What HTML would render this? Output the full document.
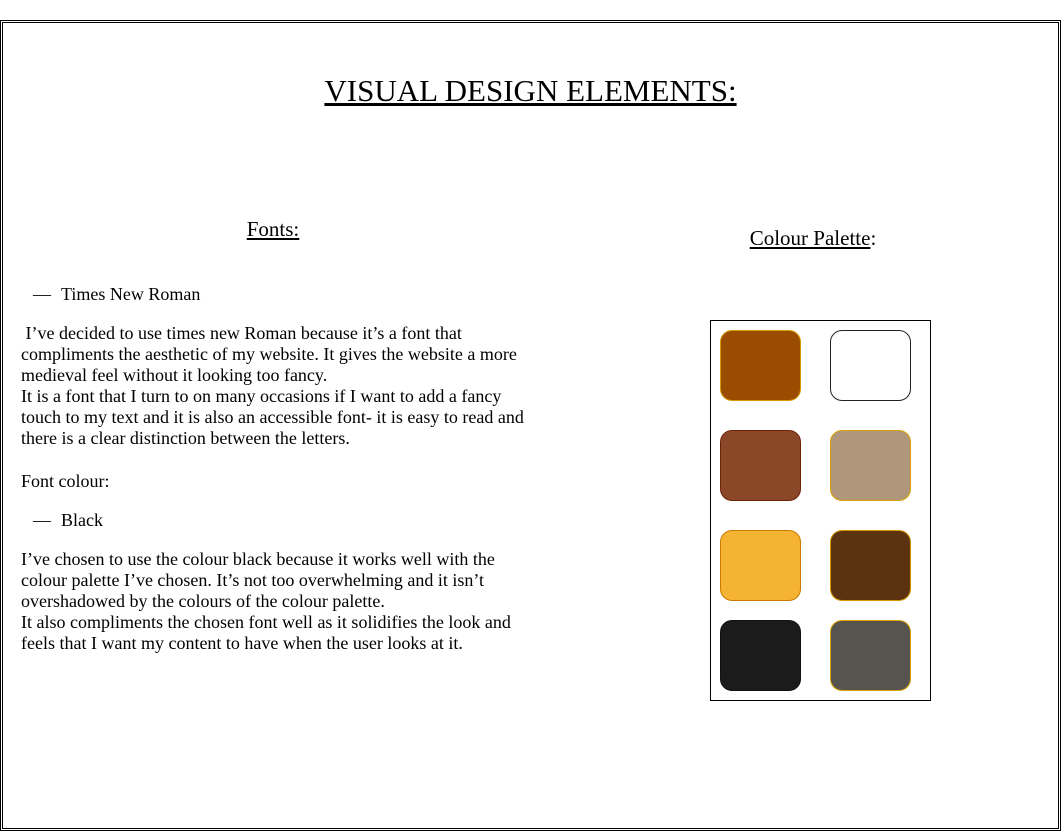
<!DOCTYPE html>
<html><head><style>
body{margin:0;width:1061px;height:831px;background:#fff;font-family:"Liberation Serif",serif;color:#000;position:relative;overflow:hidden}
.b1{position:absolute;left:0;top:20px;width:1059px;height:809px;border:1px solid #000}
.b2{position:absolute;left:2px;top:22px;width:1055px;height:805px;border:1px solid #000}
.t{position:absolute;white-space:nowrap;font-size:18px}
p{position:absolute;margin:0;font-size:18px;line-height:21px;white-space:nowrap}
.pal{position:absolute;left:710px;top:320px;width:219px;height:379px;border:1px solid #000}
.s{position:absolute;width:79px;height:69px;border-radius:12px;border:1px solid}
</style></head><body>
<div class="b1"></div><div class="b2"></div>
<div class="t" style="left:0;width:1061px;text-align:center;top:73px;font-size:31px;text-decoration:underline;">VISUAL DESIGN ELEMENTS:</div>
<div class="t" style="left:173px;width:200px;text-align:center;top:217px;font-size:21px;text-decoration:underline">Fonts:</div>
<div class="t" style="left:713px;width:200px;text-align:center;top:226px;font-size:21px"><u>Colour Palette</u>:</div>
<div class="t" style="left:33px;top:284px">—<span style="margin-left:10px">Times New Roman</span></div>
<p style="left:21px;top:323px">&nbsp;I’ve decided to use times new Roman because it’s a font that<br>compliments the aesthetic of my website. It gives the website a more<br>medieval feel without it looking too fancy.<br>It is a font that I turn to on many occasions if I want to add a fancy<br>touch to my text and it is also an accessible font- it is easy to read and<br>there is a clear distinction between the letters.</p>
<div class="t" style="left:21px;top:471px">Font colour:</div>
<div class="t" style="left:33px;top:510px">—<span style="margin-left:10px">Black</span></div>
<p style="left:21px;top:549px">I’ve chosen to use the colour black because it works well with the<br>colour palette I’ve chosen. It’s not too overwhelming and it isn’t<br>overshadowed by the colours of the colour palette.<br>It also compliments the chosen font well as it solidifies the look and<br>feels that I want my content to have when the user looks at it.</p>
<div class="pal">
<div class="s" style="left:9px;top:9px;background:#9a4c00;border-color:#d49a00"></div>
<div class="s" style="left:119px;top:9px;background:#fff;border-color:#222"></div>
<div class="s" style="left:9px;top:109px;background:#8a4829;border-color:#6e2208"></div>
<div class="s" style="left:119px;top:109px;background:#b0967b;border-color:#d9a300"></div>
<div class="s" style="left:9px;top:209px;background:#f4b333;border-color:#cc7a00"></div>
<div class="s" style="left:119px;top:209px;background:#5b3310;border-color:#d49a00"></div>
<div class="s" style="left:9px;top:299px;background:#1b1b1b;border-color:#111"></div>
<div class="s" style="left:119px;top:299px;background:#57534f;border-color:#d9a300"></div>
</div>
</body></html>
